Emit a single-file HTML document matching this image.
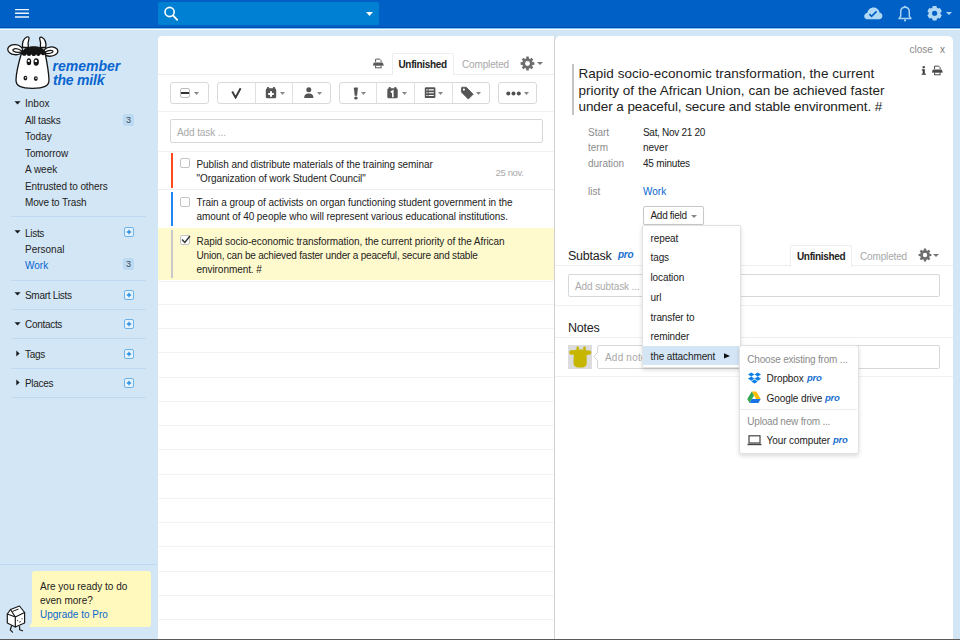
<!DOCTYPE html><html><head><meta charset="utf-8"><style>
html,body{margin:0;padding:0;width:960px;height:640px;overflow:hidden;background:#d3e6f5;font-family:"Liberation Sans", sans-serif;}
.a{position:absolute;}
.t{position:absolute;white-space:nowrap;}
</style></head><body>
<div class="a" style="left:0px;top:0px;width:960px;height:27px;background:#0060c5;"></div>
<div class="a" style="left:0px;top:27px;width:960px;height:1px;background:#0049b2;"></div>
<div class="a" style="left:0px;top:28px;width:960px;height:1px;background:#7cc4f2;"></div>
<div class="a" style="left:0px;top:29px;width:960px;height:1px;background:#f2f9fe;"></div>
<svg class="a" style="left:14px;top:7px" width="16" height="14" viewBox="0 0 16 14"><path d="M1 2.6H15M1 6.3H15M1 10H15" stroke="#eef6fd" stroke-width="1.4"/></svg>
<div class="a" style="left:158px;top:2px;width:221px;height:23px;background:#0080d2;border-radius:2px;"></div>
<svg class="a" style="left:163px;top:6px" width="16" height="16" viewBox="0 0 16 16"><circle cx="6.6" cy="6" r="4.6" fill="none" stroke="#fff" stroke-width="1.6"/><line x1="10" y1="9.4" x2="14.2" y2="13.8" stroke="#fff" stroke-width="1.8" stroke-linecap="round"/></svg>
<svg class="a" style="left:366px;top:12px" width="7" height="4" viewBox="0 0 7 4"><path d="M0 0H7L3.5 4Z" fill="#fff"/></svg>
<svg class="a" style="left:862px;top:6px" width="22" height="15" viewBox="862 6 22 15"><path d="M867 19.2C865.3 19.2 864.2 17.8 864.2 16.3 864.2 14.6 865.5 13.3 867.2 13.1 868 9.8 870.4 7.6 873.6 7.6 876.6 7.6 879 9.7 879.6 12.4 881.3 12.8 882.4 14.2 882.4 15.9 882.4 17.8 881 19.2 879.2 19.2Z" fill="#b0d8f5"/><path d="M869.4 14.2L871.6 16.4 876.6 11.4" fill="none" stroke="#0060c5" stroke-width="1.7"/></svg>
<svg class="a" style="left:897px;top:5px" width="16" height="17" viewBox="0 0 16 17"><path d="M8 2.2c-2.7 0-4.3 2.1-4.3 4.8v4.2L2 13.6h12l-1.7-2.4V7c0-2.7-1.6-4.8-4.3-4.8Z" fill="none" stroke="#a9d3f3" stroke-width="1.5" stroke-linejoin="round"/><circle cx="8" cy="15.4" r="1.1" fill="#a9d3f3"/><rect x="7.2" y="0.8" width="1.6" height="1.8" fill="#a9d3f3"/></svg>
<svg class="a" style="left:926px;top:5px" width="18" height="17" viewBox="0 0 18 17"><path d="M10.90 13.79 L10.47 15.51 L6.73 15.51 L6.30 13.79 L4.95 13.01 L3.24 13.50 L1.38 10.27 L2.65 9.03 L2.65 7.47 L1.38 6.23 L3.24 3.00 L4.95 3.49 L6.30 2.71 L6.73 0.99 L10.47 0.99 L10.90 2.71 L12.25 3.49 L13.96 3.00 L15.82 6.23 L14.55 7.47 L14.55 9.03 L15.82 10.27 L13.96 13.50 L12.25 13.01Z" fill="#b0d8f5"/><circle cx="8.6" cy="8.25" r="2.6" fill="#0060c5"/></svg>
<svg class="a" style="left:946px;top:12px" width="6" height="3" viewBox="0 0 6 3"><path d="M0 0H6L3 3Z" fill="#a9d3f3"/></svg>
<svg class="a" style="left:0px;top:30px" width="64" height="62" viewBox="0 30 64 62"><g stroke="#151515" stroke-width="1.3" fill="#fff" stroke-linejoin="round">
<path d="M22.6 47.5C22 43 23.5 38.8 26.8 37 28 36.4 29.3 37.2 29 38.6 28 41.5 27.6 44.5 28.4 47.5Z"/>
<path d="M45.8 47.5C46.4 43 45 39 41.8 37.3 40.6 36.7 39.4 37.6 39.7 38.9 40.7 41.7 41 44.5 40.3 47.5Z"/>
<ellipse cx="15.2" cy="49.7" rx="7.5" ry="5" transform="rotate(6 15.2 49.7)"/>
<ellipse cx="50.6" cy="51.6" rx="7.3" ry="4.6" transform="rotate(-6 50.6 51.6)"/>
<path d="M21.5 53C19.3 60.5 16.2 72 16 80 15.8 86 21 88.3 32.5 88.3S49.2 86 49 80C48.8 72 46.6 60.5 45 52.5Z"/>
</g>
<path d="M22.3 51.2C19 49 15 48.2 13.2 49.4 12 50.4 14 52.3 18.5 52.3 20 52.3 21.5 52 22.5 51.6" stroke="#151515" stroke-width="1.2" fill="none"/>
<path d="M44 52.8C47 50.6 51 49.9 52.6 50.8 53.8 51.8 51.8 53.6 47.8 53.6 46.3 53.6 45 53.4 44 53.1" stroke="#151515" stroke-width="1.2" fill="none"/>
<path d="M21.8 52.6C23.3 48.6 28 46.3 33.5 46.3S43.4 48 45.4 51.8A2.4 2.4 0 0 1 40.8 53.6A2.4 2.4 0 0 1 36.1 54.2A2.4 2.4 0 0 1 31.4 54.2A2.4 2.4 0 0 1 26.7 53.9A2.4 2.4 0 0 1 21.8 52.6Z" fill="#151515"/>
<ellipse cx="28.9" cy="61.8" rx="2.3" ry="3.5" fill="#151515"/><ellipse cx="36.2" cy="62" rx="2.7" ry="3.7" fill="#151515"/>
<ellipse cx="28.8" cy="60.9" rx="1.2" ry="1.1" fill="#fff"/><ellipse cx="35.9" cy="61" rx="1.3" ry="1.2" fill="#fff"/>
<ellipse cx="25.4" cy="78.1" rx="1.9" ry="2.3" fill="#151515"/><ellipse cx="35.8" cy="78.6" rx="1.9" ry="2.3" fill="#151515"/>
<circle cx="25.6" cy="77.8" r=".8" fill="#fff"/><circle cx="36" cy="78.3" r=".8" fill="#fff"/></svg>
<div class="t" style="left:52.5px;top:59px;font-size:14px;line-height:14px;color:#0865cf;font-weight:bold;font-style:italic;">remember</div>
<div class="t" style="left:53px;top:73px;font-size:14px;line-height:14px;color:#0865cf;font-weight:bold;font-style:italic;letter-spacing:-0.2px;">the milk</div>
<div class="a" style="left:102px;top:74px;width:3.5px;height:1px;background:#5a9ad8;"></div>
<div class="t" style="left:25px;top:99px;font-size:10px;line-height:10px;color:#222;">Inbox</div>
<svg class="a" style="left:14px;top:101px" width="7" height="4" viewBox="0 0 7 4"><path d="M0.5 0.3H6.6L3.55 3.6Z" fill="#1a1a1a"/></svg>
<div class="t" style="left:25px;top:116px;font-size:10px;line-height:10px;color:#222;letter-spacing:-0.2px;">All tasks</div>
<div class="a" style="left:123px;top:114px;width:11px;height:12px;border-radius:2px;background:#bcdaf2;"></div>
<div class="t" style="left:126px;top:116px;font-size:9px;line-height:9px;color:#3a4a5a;">3</div>
<div class="t" style="left:25px;top:132px;font-size:10px;line-height:10px;color:#222;">Today</div>
<div class="t" style="left:25px;top:149px;font-size:10px;line-height:10px;color:#222;letter-spacing:-0.1px;">Tomorrow</div>
<div class="t" style="left:25px;top:165px;font-size:10px;line-height:10px;color:#222;">A week</div>
<div class="t" style="left:25px;top:182px;font-size:10px;line-height:10px;color:#222;letter-spacing:-0.1px;">Entrusted to others</div>
<div class="t" style="left:25px;top:198px;font-size:10px;line-height:10px;color:#222;letter-spacing:-0.15px;">Move to Trash</div>
<div class="a" style="left:11px;top:216px;width:135px;height:1px;background:#bfdaf0;"></div>
<div class="a" style="left:11px;top:280px;width:135px;height:1px;background:#bfdaf0;"></div>
<div class="a" style="left:11px;top:309px;width:135px;height:1px;background:#bfdaf0;"></div>
<div class="a" style="left:11px;top:338px;width:135px;height:1px;background:#bfdaf0;"></div>
<div class="a" style="left:11px;top:368px;width:135px;height:1px;background:#bfdaf0;"></div>
<div class="a" style="left:11px;top:397px;width:135px;height:1px;background:#bfdaf0;"></div>
<div class="t" style="left:25px;top:229px;font-size:10px;line-height:10px;color:#222;letter-spacing:-0.3px;">Lists</div>
<svg class="a" style="left:14px;top:230px" width="7" height="4" viewBox="0 0 7 4"><path d="M0.5 0.3H6.6L3.55 3.6Z" fill="#1a1a1a"/></svg>
<div class="a" style="left:124px;top:227px;width:8px;height:8px;border:1px solid #6ab2e8;border-radius:2px;background:#e6f3fc;"></div>
<svg class="a" style="left:126px;top:229px" width="6" height="6" viewBox="0 0 6 6"><path d="M3 0.8V5.2M0.8 3H5.2" stroke="#2a8ee0" stroke-width="1.3"/></svg>
<div class="t" style="left:25px;top:245px;font-size:10px;line-height:10px;color:#222;">Personal</div>
<div class="t" style="left:25px;top:261px;font-size:10px;line-height:10px;color:#0865d2;">Work</div>
<div class="a" style="left:123px;top:258px;width:11px;height:12px;border-radius:2px;background:#bcdaf2;"></div>
<div class="t" style="left:126px;top:260px;font-size:9px;line-height:9px;color:#3a4a5a;">3</div>
<div class="t" style="left:25px;top:291px;font-size:10px;line-height:10px;color:#222;letter-spacing:-0.3px;">Smart Lists</div>
<svg class="a" style="left:14px;top:292px" width="7" height="4" viewBox="0 0 7 4"><path d="M0.5 0.3H6.6L3.55 3.6Z" fill="#1a1a1a"/></svg>
<div class="a" style="left:124px;top:290px;width:8px;height:8px;border:1px solid #6ab2e8;border-radius:2px;background:#e6f3fc;"></div>
<svg class="a" style="left:126px;top:292px" width="6" height="6" viewBox="0 0 6 6"><path d="M3 0.8V5.2M0.8 3H5.2" stroke="#2a8ee0" stroke-width="1.3"/></svg>
<div class="t" style="left:25px;top:320px;font-size:10px;line-height:10px;color:#222;letter-spacing:-0.3px;">Contacts</div>
<svg class="a" style="left:14px;top:322px" width="7" height="4" viewBox="0 0 7 4"><path d="M0.5 0.3H6.6L3.55 3.6Z" fill="#1a1a1a"/></svg>
<div class="a" style="left:124px;top:319px;width:8px;height:8px;border:1px solid #6ab2e8;border-radius:2px;background:#e6f3fc;"></div>
<svg class="a" style="left:126px;top:321px" width="6" height="6" viewBox="0 0 6 6"><path d="M3 0.8V5.2M0.8 3H5.2" stroke="#2a8ee0" stroke-width="1.3"/></svg>
<div class="t" style="left:25px;top:350px;font-size:10px;line-height:10px;color:#222;letter-spacing:-0.3px;">Tags</div>
<svg class="a" style="left:16px;top:350px" width="4" height="7" viewBox="0 0 4 7"><path d="M0.3 0.4V6.4L3.6 3.4Z" fill="#1a1a1a"/></svg>
<div class="a" style="left:124px;top:349px;width:8px;height:8px;border:1px solid #6ab2e8;border-radius:2px;background:#e6f3fc;"></div>
<svg class="a" style="left:126px;top:351px" width="6" height="6" viewBox="0 0 6 6"><path d="M3 0.8V5.2M0.8 3H5.2" stroke="#2a8ee0" stroke-width="1.3"/></svg>
<div class="t" style="left:25px;top:379px;font-size:10px;line-height:10px;color:#222;letter-spacing:-0.3px;">Places</div>
<svg class="a" style="left:16px;top:379px" width="4" height="7" viewBox="0 0 4 7"><path d="M0.3 0.4V6.4L3.6 3.4Z" fill="#1a1a1a"/></svg>
<div class="a" style="left:124px;top:378px;width:8px;height:8px;border:1px solid #6ab2e8;border-radius:2px;background:#e6f3fc;"></div>
<svg class="a" style="left:126px;top:380px" width="6" height="6" viewBox="0 0 6 6"><path d="M3 0.8V5.2M0.8 3H5.2" stroke="#2a8ee0" stroke-width="1.3"/></svg>
<div class="a" style="left:0px;top:564px;width:157px;height:1px;background:#bfdaf0;"></div>
<div class="a" style="left:32px;top:571px;width:119px;height:56px;background:#fff9bd;border-radius:3px 3px 3px 0;"></div>
<svg class="a" style="left:29px;top:621px" width="4" height="6" viewBox="0 0 4 6"><path d="M4 0V6H0Z" fill="#fff9bd"/></svg>
<div class="t" style="left:40px;top:582px;font-size:10px;line-height:10px;color:#222;">Are you ready to do</div>
<div class="t" style="left:40px;top:596px;font-size:10px;line-height:10px;color:#222;">even more?</div>
<div class="t" style="left:40px;top:610px;font-size:10px;line-height:10px;color:#0865d2;">Upgrade to Pro</div>
<svg class="a" style="left:2px;top:602px" width="28" height="34" viewBox="2 602 28 34"><g stroke="#1a1a1a" stroke-width="1.2" fill="#fff" stroke-linejoin="round" stroke-linecap="round"><path d="M7.3 614L10.5 609.5 19.5 606 24.6 612.5V623L15.3 627 7.3 623Z"/><path d="M7.3 614L15.3 617 24.6 612.5M15.3 617V627M10.5 609.5L15.3 617"/><path d="M12.8 611.3L18.2 609.2" stroke-width="1"/><path d="M11.5 626L10.3 629.8 12.5 632.2M19.6 626.5L19.6 629.8 22.5 630.8" fill="none"/></g><circle cx="17.6" cy="620.6" r=".6" fill="#1a1a1a"/><circle cx="22" cy="618.8" r=".6" fill="#1a1a1a"/><path d="M19 622.2L21 621.6" stroke="#1a1a1a" stroke-width=".8"/></svg>
<div class="a" style="left:158px;top:36px;width:396px;height:604px;background:#fff;border-radius:4px 0 0 0;"></div>
<div class="a" style="left:554px;top:36px;width:399px;height:604px;background:#fff;border-radius:5px 5px 0 0;border-left:1px solid #d0d0d0;box-sizing:border-box;"></div>
<svg class="a" style="left:373px;top:58px" width="11" height="11" viewBox="0 0 11 11"><path d="M2.6 4V1.1H6.6L8.1 2.6V4" fill="none" stroke="#5a5a5a" stroke-width="1"/><path d="M1.6 4.6H8.9Q10.2 4.6 10.2 5.9V7.6H0.3V5.9Q0.3 4.6 1.6 4.6Z" fill="#5a5a5a"/><path d="M0.3 7.6V6.5M10.2 7.6V6.5" stroke="#5a5a5a"/><rect x="2.6" y="7.2" width="5.5" height="2.6" fill="#fff" stroke="#5a5a5a" stroke-width="1"/></svg>
<div class="a" style="left:392px;top:53px;width:60px;height:21px;border:1px solid #eee;border-bottom:none;border-radius:2px 2px 0 0;background:#fff;"></div>
<div class="t" style="left:398.5px;top:60px;font-size:10px;line-height:10px;color:#222;font-weight:bold;letter-spacing:-0.35px;">Unfinished</div>
<div class="t" style="left:462px;top:60px;font-size:10px;line-height:10px;color:#a8a8a8;letter-spacing:-0.15px;">Completed</div>
<svg class="a" style="left:520px;top:56px" width="15" height="15" viewBox="0 0 15 15"><path d="M12.51 6.11 L14.40 6.30 L14.40 8.70 L12.51 8.89 L12.02 10.06 L13.23 11.53 L11.53 13.23 L10.06 12.02 L8.89 12.51 L8.70 14.40 L6.30 14.40 L6.11 12.51 L4.94 12.02 L3.47 13.23 L1.77 11.53 L2.98 10.06 L2.49 8.89 L0.60 8.70 L0.60 6.30 L2.49 6.11 L2.98 4.94 L1.77 3.47 L3.47 1.77 L4.94 2.98 L6.11 2.49 L6.30 0.60 L8.70 0.60 L8.89 2.49 L10.06 2.98 L11.53 1.77 L13.23 3.47 L12.02 4.94Z" fill="#6e6e6e"/><circle cx="7.5" cy="7.5" r="2.4" fill="#fff"/></svg>
<svg class="a" style="left:537px;top:62px" width="6" height="3" viewBox="0 0 6 3"><path d="M0 0H6L3 3Z" fill="#777"/></svg>
<div class="a" style="left:158px;top:74px;width:234px;height:1px;background:#eee;"></div>
<div class="a" style="left:453px;top:74px;width:101px;height:1px;background:#eee;"></div>
<div class="a" style="left:170px;top:82px;width:37px;height:20px;border:1px solid #d9d9d9;border-radius:3px;background:#fff;"></div>
<div class="a" style="left:217px;top:82px;width:112px;height:20px;border:1px solid #d9d9d9;border-radius:3px;background:#fff;"></div>
<div class="a" style="left:339px;top:82px;width:149px;height:20px;border:1px solid #d9d9d9;border-radius:3px;background:#fff;"></div>
<div class="a" style="left:498px;top:82px;width:37px;height:20px;border:1px solid #d9d9d9;border-radius:3px;background:#fff;"></div>
<div class="a" style="left:292px;top:83px;width:1px;height:20px;background:#e0e0e0;"></div>
<div class="a" style="left:376px;top:83px;width:1px;height:20px;background:#e0e0e0;"></div>
<div class="a" style="left:414px;top:83px;width:1px;height:20px;background:#e0e0e0;"></div>
<div class="a" style="left:452px;top:83px;width:1px;height:20px;background:#e0e0e0;"></div>
<div class="a" style="left:255px;top:83px;width:1px;height:20px;background:#e0e0e0;"></div>
<div class="a" style="left:180px;top:88px;width:8px;height:8px;border:1px solid #bbb;border-radius:2px;"></div>
<div class="a" style="left:181px;top:92px;width:8px;height:1.5px;background:#333;"></div>
<svg class="a" style="left:194px;top:92px" width="5" height="3" viewBox="0 0 5 3"><path d="M0 0H5L2.5 3Z" fill="#888"/></svg>
<svg class="a" style="left:230px;top:87px" width="12" height="12" viewBox="0 0 12 12"><path d="M2.2 4.5L5.6 10.5L10.6 1.2" fill="none" stroke="#3a3a3a" stroke-width="1.9" stroke-linejoin="miter"/></svg>
<svg class="a" style="left:265px;top:87px" width="12" height="12" viewBox="0 0 12 12"><rect x="0.8" y="1.3" width="10.4" height="10" rx="1.6" fill="#555"/><rect x="2.2" y="0" width="1.8" height="2.5" fill="#555"/><rect x="8" y="0" width="1.8" height="2.5" fill="#555"/><path d="M6 4.2V9.8M3.2 7H8.8" stroke="#fff" stroke-width="2"/></svg>
<svg class="a" style="left:280px;top:92px" width="5" height="3" viewBox="0 0 5 3"><path d="M0 0H5L2.5 3Z" fill="#888"/></svg>
<svg class="a" style="left:303px;top:87px" width="12" height="12" viewBox="0 0 12 12"><circle cx="5.8" cy="2.7" r="2.5" fill="#555"/><path d="M1.2 11C1.2 7.8 3.2 6.6 5.8 6.6S10.4 7.8 10.4 11Z" fill="#555"/></svg>
<svg class="a" style="left:317px;top:92px" width="5" height="3" viewBox="0 0 5 3"><path d="M0 0H5L2.5 3Z" fill="#888"/></svg>
<svg class="a" style="left:353px;top:87px" width="6" height="13" viewBox="0 0 6 13"><path d="M0.9 1.2Q0.9 0.5 1.6 0.5H4.2Q4.9 0.5 4.9 1.2L4.1 8.8H1.7Z" fill="#555"/><ellipse cx="2.9" cy="10.9" rx="1.8" ry="1.5" fill="#555"/></svg>
<svg class="a" style="left:361px;top:92px" width="5" height="3" viewBox="0 0 5 3"><path d="M0 0H5L2.5 3Z" fill="#888"/></svg>
<svg class="a" style="left:387px;top:87px" width="11" height="12" viewBox="0 0 11 12"><rect x="0.3" y="1.3" width="10.4" height="10" rx="1.6" fill="#555"/><rect x="1.8" y="0" width="1.8" height="2.5" fill="#555"/><rect x="7.4" y="0" width="1.8" height="2.5" fill="#555"/><path d="M3.8 5.2L5.8 4V10.2" stroke="#fff" stroke-width="1.6" fill="none"/></svg>
<svg class="a" style="left:402px;top:92px" width="5" height="3" viewBox="0 0 5 3"><path d="M0 0H5L2.5 3Z" fill="#888"/></svg>
<svg class="a" style="left:424px;top:87px" width="12" height="12" viewBox="0 0 12 12"><rect x="0.8" y="0.3" width="10.6" height="10.8" rx="1.2" fill="#555"/><path d="M2.3 2.9h1.3M2.3 5.7h1.3M2.3 8.5h1.3M4.6 2.9h5.2M4.6 5.7h5.2M4.6 8.5h5.2" stroke="#fff" stroke-width="1.1"/></svg>
<svg class="a" style="left:438px;top:92px" width="5" height="3" viewBox="0 0 5 3"><path d="M0 0H5L2.5 3Z" fill="#888"/></svg>
<svg class="a" style="left:460px;top:86px" width="14" height="14" viewBox="0 0 14 14"><path d="M1.5 1.8Q1.5 1.2 2.1 1.2H6.2L13.2 8.2L8.3 13.1L1.5 6.2Z" fill="#555" stroke="#555" stroke-linejoin="round" stroke-width="0.8"/><circle cx="3.9" cy="3.6" r="1.1" fill="#fff"/></svg>
<svg class="a" style="left:476px;top:92px" width="5" height="3" viewBox="0 0 5 3"><path d="M0 0H5L2.5 3Z" fill="#888"/></svg>
<svg class="a" style="left:506px;top:91px" width="16" height="5" viewBox="0 0 16 5"><circle cx="2.3" cy="2.6" r="2" fill="#505050"/><circle cx="7.5" cy="2.6" r="2" fill="#505050"/><circle cx="12.8" cy="2.6" r="2" fill="#505050"/></svg>
<svg class="a" style="left:524px;top:92px" width="5" height="3" viewBox="0 0 5 3"><path d="M0 0H5L2.5 3Z" fill="#888"/></svg>
<div class="a" style="left:158px;top:111px;width:396px;height:1px;background:#f0f0f0;"></div>
<div class="a" style="left:170px;top:119px;width:371px;height:22px;border:1px solid #d6d8da;border-radius:2px;"></div>
<div class="t" style="left:177px;top:128px;font-size:10px;line-height:10px;color:#aaa;letter-spacing:-0.1px;">Add task ...</div>
<div class="a" style="left:158px;top:151px;width:396px;height:1px;background:#f0f0f0;"></div>
<div class="a" style="left:171px;top:153px;width:2px;height:35px;background:#ff4b1a;"></div>
<div class="a" style="left:180px;top:158px;width:8px;height:8px;border:1px solid #c4c4c4;border-radius:2px;background:#fff;"></div>
<div class="t" style="left:196.5px;top:160px;font-size:10px;line-height:10px;color:#222;letter-spacing:-0.08px;">Publish and distribute materials of the training seminar</div>
<div class="t" style="left:196.5px;top:174px;font-size:10px;line-height:10px;color:#222;letter-spacing:-0.08px;">"Organization of work Student Council"</div>
<div class="t" style="left:495.5px;top:168px;font-size:9.5px;line-height:9.5px;color:#a8a8a8;letter-spacing:-0.35px;">25 nov.</div>
<div class="a" style="left:158px;top:189px;width:396px;height:1px;background:#eee;"></div>
<div class="a" style="left:171px;top:192px;width:2px;height:34px;background:#1e88f0;"></div>
<div class="a" style="left:180px;top:197px;width:8px;height:8px;border:1px solid #c4c4c4;border-radius:2px;background:#fff;"></div>
<div class="t" style="left:196.5px;top:198px;font-size:10px;line-height:10px;color:#222;letter-spacing:-0.06px;">Train a group of activists on organ functioning student government in the</div>
<div class="t" style="left:196.5px;top:212px;font-size:10px;line-height:10px;color:#222;letter-spacing:-0.06px;">amount of 40 people who will represent various educational institutions.</div>
<div class="a" style="left:158px;top:228px;width:396px;height:52px;background:#fffacd;"></div>
<div class="a" style="left:171px;top:230px;width:2px;height:48px;background:#c8c8c8;"></div>
<div class="a" style="left:180px;top:235px;width:8px;height:8px;border:1px solid #c4c4c4;border-radius:2px;background:#fff;"></div>
<svg class="a" style="left:181px;top:235px" width="10" height="9" viewBox="0 0 10 9"><path d="M1 4.5L3.8 7.5L9 1" fill="none" stroke="#333" stroke-width="1.4"/></svg>
<div class="t" style="left:196.5px;top:237px;font-size:10px;line-height:10px;color:#222;letter-spacing:-0.06px;">Rapid socio-economic transformation, the current priority of the African</div>
<div class="t" style="left:196.5px;top:251px;font-size:10px;line-height:10px;color:#222;letter-spacing:-0.2px;">Union, can be achieved faster under a peaceful, secure and stable</div>
<div class="t" style="left:196.5px;top:265px;font-size:10px;line-height:10px;color:#222;letter-spacing:-0.06px;">environment. #</div>
<div class="a" style="left:158px;top:281px;width:396px;height:1px;background:#f3f3f3;"></div>
<div class="a" style="left:158px;top:304px;width:396px;height:1px;background:#f3f3f3;"></div>
<div class="a" style="left:158px;top:328px;width:396px;height:1px;background:#f3f3f3;"></div>
<div class="a" style="left:158px;top:352px;width:396px;height:1px;background:#f3f3f3;"></div>
<div class="a" style="left:158px;top:377px;width:396px;height:1px;background:#f3f3f3;"></div>
<div class="a" style="left:158px;top:401px;width:396px;height:1px;background:#f3f3f3;"></div>
<div class="a" style="left:158px;top:425px;width:396px;height:1px;background:#f3f3f3;"></div>
<div class="a" style="left:158px;top:449px;width:396px;height:1px;background:#f3f3f3;"></div>
<div class="a" style="left:158px;top:474px;width:396px;height:1px;background:#f3f3f3;"></div>
<div class="a" style="left:158px;top:498px;width:396px;height:1px;background:#f3f3f3;"></div>
<div class="a" style="left:158px;top:522px;width:396px;height:1px;background:#f3f3f3;"></div>
<div class="a" style="left:158px;top:546px;width:396px;height:1px;background:#f3f3f3;"></div>
<div class="a" style="left:158px;top:571px;width:396px;height:1px;background:#f3f3f3;"></div>
<div class="a" style="left:158px;top:595px;width:396px;height:1px;background:#f3f3f3;"></div>
<div class="a" style="left:158px;top:619px;width:396px;height:1px;background:#f3f3f3;"></div>
<div class="t" style="left:909.5px;top:45px;font-size:10px;line-height:10px;color:#8a8a8a;">close</div>
<div class="t" style="left:940px;top:45px;font-size:10px;line-height:10px;color:#7a7a7a;">x</div>
<svg class="a" style="left:921px;top:66px" width="6" height="9" viewBox="0 0 6 9"><rect x="1.6" y="0.2" width="2.2" height="2" fill="#3a3a3a"/><path d="M0.8 3.3H3.8V7.7H5V8.8H0.6V7.7H1.7V4.4H0.8Z" fill="#3a3a3a"/></svg>
<svg class="a" style="left:932px;top:65px" width="11" height="11" viewBox="0 0 11 11"><path d="M2.6 4V1.1H6.6L8.1 2.6V4" fill="none" stroke="#4a4a4a" stroke-width="1"/><path d="M1.6 4.6H8.9Q10.2 4.6 10.2 5.9V7.6H0.3V5.9Q0.3 4.6 1.6 4.6Z" fill="#4a4a4a"/><path d="M0.3 7.6V6.5M10.2 7.6V6.5" stroke="#4a4a4a"/><rect x="2.6" y="7.2" width="5.5" height="2.6" fill="#fff" stroke="#4a4a4a" stroke-width="1"/></svg>
<div class="a" style="left:572px;top:64px;width:2px;height:51px;background:#c4c4c4;"></div>
<div class="t" style="left:578.5px;top:67px;font-size:13.5px;line-height:13.5px;color:#222;letter-spacing:0.02px;">Rapid socio-economic transformation, the current</div>
<div class="t" style="left:578.5px;top:84px;font-size:13.5px;line-height:13.5px;color:#222;letter-spacing:0.01px;">priority of the African Union, can be achieved faster</div>
<div class="t" style="left:578.5px;top:100px;font-size:13.5px;line-height:13.5px;color:#222;letter-spacing:-0.08px;">under a peaceful, secure and stable environment. #</div>
<div class="t" style="left:588px;top:128px;font-size:10px;line-height:10px;color:#8c8c8c;">Start</div>
<div class="t" style="left:643px;top:128px;font-size:10px;line-height:10px;color:#222;letter-spacing:-0.3px;">Sat, Nov 21 20</div>
<div class="t" style="left:588px;top:143px;font-size:10px;line-height:10px;color:#8c8c8c;">term</div>
<div class="t" style="left:643px;top:143px;font-size:10px;line-height:10px;color:#222;">never</div>
<div class="t" style="left:588px;top:159px;font-size:10px;line-height:10px;color:#8c8c8c;">duration</div>
<div class="t" style="left:643px;top:159px;font-size:10px;line-height:10px;color:#222;letter-spacing:-0.2px;">45 minutes</div>
<div class="t" style="left:588px;top:187px;font-size:10px;line-height:10px;color:#8c8c8c;">list</div>
<div class="t" style="left:643px;top:187px;font-size:10px;line-height:10px;color:#0865d2;">Work</div>
<div class="a" style="left:643px;top:206px;width:59px;height:17px;border:1px solid #c8c8c8;border-radius:2px;background:#fff;box-shadow:0 1px 1px rgba(0,0,0,.08);"></div>
<div class="t" style="left:650.5px;top:211px;font-size:10px;line-height:10px;color:#222;letter-spacing:-0.3px;">Add field</div>
<svg class="a" style="left:691px;top:215px" width="6" height="3" viewBox="0 0 6 3"><path d="M0 0H6L3 3Z" fill="#888"/></svg>
<div class="t" style="left:568px;top:250px;font-size:12.5px;line-height:12.5px;color:#222;letter-spacing:-0.25px;">Subtask</div>
<div class="t" style="left:618px;top:250px;font-size:10px;line-height:10px;color:#1a6fd0;font-weight:bold;font-style:italic;letter-spacing:-0.3px;">pro</div>
<div class="a" style="left:790px;top:245px;width:60px;height:21px;border:1px solid #eee;border-bottom:none;border-radius:2px 2px 0 0;background:#fff;"></div>
<div class="t" style="left:797px;top:252px;font-size:10px;line-height:10px;color:#222;font-weight:bold;letter-spacing:-0.35px;">Unfinished</div>
<div class="t" style="left:860px;top:252px;font-size:10px;line-height:10px;color:#a8a8a8;letter-spacing:-0.15px;">Completed</div>
<svg class="a" style="left:918px;top:248px" width="14" height="14" viewBox="0 0 14 14"><path d="M11.63 5.72 L13.40 5.88 L13.40 8.12 L11.63 8.28 L11.18 9.37 L12.32 10.74 L10.74 12.32 L9.37 11.18 L8.28 11.63 L8.12 13.40 L5.88 13.40 L5.72 11.63 L4.63 11.18 L3.26 12.32 L1.68 10.74 L2.82 9.37 L2.37 8.28 L0.60 8.12 L0.60 5.88 L2.37 5.72 L2.82 4.63 L1.68 3.26 L3.26 1.68 L4.63 2.82 L5.72 2.37 L5.88 0.60 L8.12 0.60 L8.28 2.37 L9.37 2.82 L10.74 1.68 L12.32 3.26 L11.18 4.63Z" fill="#6e6e6e"/><circle cx="7" cy="7" r="2.2" fill="#fff"/></svg>
<svg class="a" style="left:933px;top:254px" width="6" height="3" viewBox="0 0 6 3"><path d="M0 0H6L3 3Z" fill="#777"/></svg>
<div class="a" style="left:555px;top:265px;width:235px;height:1px;background:#eee;"></div>
<div class="a" style="left:851px;top:265px;width:102px;height:1px;background:#eee;"></div>
<div class="a" style="left:568px;top:274px;width:370px;height:21px;border:1px solid #d8d8d8;border-radius:2px;"></div>
<div class="t" style="left:575px;top:282px;font-size:10px;line-height:10px;color:#aaa;letter-spacing:-0.1px;">Add subtask ...</div>
<div class="a" style="left:555px;top:305px;width:398px;height:1px;background:#f0f0f0;"></div>
<div class="t" style="left:568px;top:322px;font-size:12.5px;line-height:12.5px;color:#222;letter-spacing:-0.2px;">Notes</div>
<div class="a" style="left:555px;top:337px;width:398px;height:1px;background:#eee;"></div>
<div class="a" style="left:555px;top:376px;width:398px;height:1px;background:#f0f0f0;"></div>
<div class="a" style="left:568px;top:345px;width:24px;height:24px;background:#dcdcdc;"></div>
<svg class="a" style="left:568px;top:345px" width="24" height="24" viewBox="0 0 24 24"><g fill="#c6b600"><rect x="8.4" y="1.4" width="2.6" height="6" rx="1.3"/><rect x="15.2" y="1.4" width="2.6" height="6" rx="1.3"/><ellipse cx="4.8" cy="7.4" rx="3.6" ry="2.4"/><ellipse cx="19.6" cy="7.6" rx="3.6" ry="2.4"/><path d="M6.8 5C9 4.3 15.5 4.3 17.8 5 18.6 9 19 14 18.6 19 18.2 21.6 15.5 22.6 12.3 22.6S6 21.6 5.6 19C5.2 14 5.8 9 6.8 5Z"/></g></svg>
<div class="a" style="left:597px;top:345px;width:341px;height:22px;border:1px solid #d8d8d8;border-radius:2px;background:#fff;"></div>
<svg class="a" style="left:593px;top:352px" width="6" height="9" viewBox="0 0 6 9"><path d="M5 0L0.8 4.5L5 9" fill="#fff" stroke="#d0d0d0" stroke-width="1"/></svg>
<div class="t" style="left:605px;top:353px;font-size:10px;line-height:10px;color:#a8a8a8;letter-spacing:0.2px;">Add notes ...</div>
<div class="a" style="left:642px;top:225px;width:97px;height:141px;background:#fff;border:1px solid #e2e2e2;border-radius:2px;box-shadow:0 2px 4px rgba(0,0,0,.15);"></div>
<div class="a" style="left:643px;top:346px;width:96px;height:19px;background:#d4e6f6;"></div>
<div class="t" style="left:650.5px;top:234px;font-size:10px;line-height:10px;color:#222;letter-spacing:-0.1px;">repeat</div>
<div class="t" style="left:650.5px;top:253px;font-size:10px;line-height:10px;color:#222;letter-spacing:-0.1px;">tags</div>
<div class="t" style="left:650.5px;top:273px;font-size:10px;line-height:10px;color:#222;letter-spacing:-0.1px;">location</div>
<div class="t" style="left:650.5px;top:293px;font-size:10px;line-height:10px;color:#222;letter-spacing:-0.1px;">url</div>
<div class="t" style="left:650.5px;top:313px;font-size:10px;line-height:10px;color:#222;letter-spacing:-0.1px;">transfer to</div>
<div class="t" style="left:650.5px;top:332px;font-size:10px;line-height:10px;color:#222;letter-spacing:-0.1px;">reminder</div>
<div class="t" style="left:650.5px;top:352px;font-size:10px;line-height:10px;color:#222;letter-spacing:-0.1px;">the attachment</div>
<svg class="a" style="left:724px;top:353px" width="6" height="6" viewBox="0 0 6 6"><path d="M0 0.2L6 2.9L0 5.6Z" fill="#111"/></svg>
<div class="a" style="left:739px;top:345px;width:118px;height:107px;background:#fff;border:1px solid #e2e2e2;border-radius:3px;box-shadow:0 2px 4px rgba(0,0,0,.15);"></div>
<div class="t" style="left:747.3px;top:355px;font-size:10px;line-height:10px;color:#8c8c8c;letter-spacing:-0.2px;">Choose existing from ...</div>
<svg class="a" style="left:748px;top:372px" width="13" height="12" viewBox="0 1.5 24 21"><path d="M6 1.807L0 5.629l6 3.822 6.001-3.822L6 1.807zM18 1.807l-6 3.822 6 3.822 6-3.822-6-3.822zM0 13.274l6 3.822 6.001-3.822L6 9.452l-6 3.822zM18 9.452l-6 3.822 6 3.822 6-3.822-6-3.822zM6 18.371l6.001 3.822 6-3.822-6-3.822L6 18.371z" fill="#0d80e6"/></svg>
<div class="t" style="left:766.6px;top:374px;font-size:10px;line-height:10px;color:#222;letter-spacing:-0.1px;">Dropbox</div>
<div class="t" style="left:807px;top:373px;font-size:9.5px;line-height:9.5px;color:#1a6fd0;font-weight:bold;font-style:italic;letter-spacing:-0.3px;">pro</div>
<svg class="a" style="left:747px;top:391px" width="14" height="13" viewBox="0 0 14 13"><path d="M4.7 0.5H9.3L13.7 8H9.1Z" fill="#fbbc04"/><path d="M4.7 0.5L0.3 8L2.6 12L7 4.5Z" fill="#34a853"/><path d="M2.6 12H11.4L13.7 8H4.9Z" fill="#1a73e8"/></svg>
<div class="t" style="left:766.6px;top:394px;font-size:10px;line-height:10px;color:#222;letter-spacing:-0.1px;">Google drive</div>
<div class="t" style="left:825px;top:393px;font-size:9.5px;line-height:9.5px;color:#1a6fd0;font-weight:bold;font-style:italic;letter-spacing:-0.3px;">pro</div>
<div class="a" style="left:740px;top:409px;width:117px;height:1px;background:#ececec;"></div>
<div class="t" style="left:747.3px;top:417px;font-size:10px;line-height:10px;color:#8c8c8c;letter-spacing:-0.2px;">Upload new from ...</div>
<svg class="a" style="left:747px;top:435px" width="15" height="11" viewBox="0 0 15 11"><rect x="2" y="0.8" width="11" height="7.2" fill="#fff" stroke="#444" stroke-width="1.2"/><path d="M0.5 9.5H14.5" stroke="#444" stroke-width="1.4"/></svg>
<div class="t" style="left:766.6px;top:436px;font-size:10px;line-height:10px;color:#222;letter-spacing:-0.1px;">Your computer</div>
<div class="t" style="left:833px;top:435px;font-size:9.5px;line-height:9.5px;color:#1a6fd0;font-weight:bold;font-style:italic;letter-spacing:-0.3px;">pro</div>
<div class="a" style="left:0px;top:639px;width:960px;height:1px;background:#5a5a5a;"></div>
</body></html>
